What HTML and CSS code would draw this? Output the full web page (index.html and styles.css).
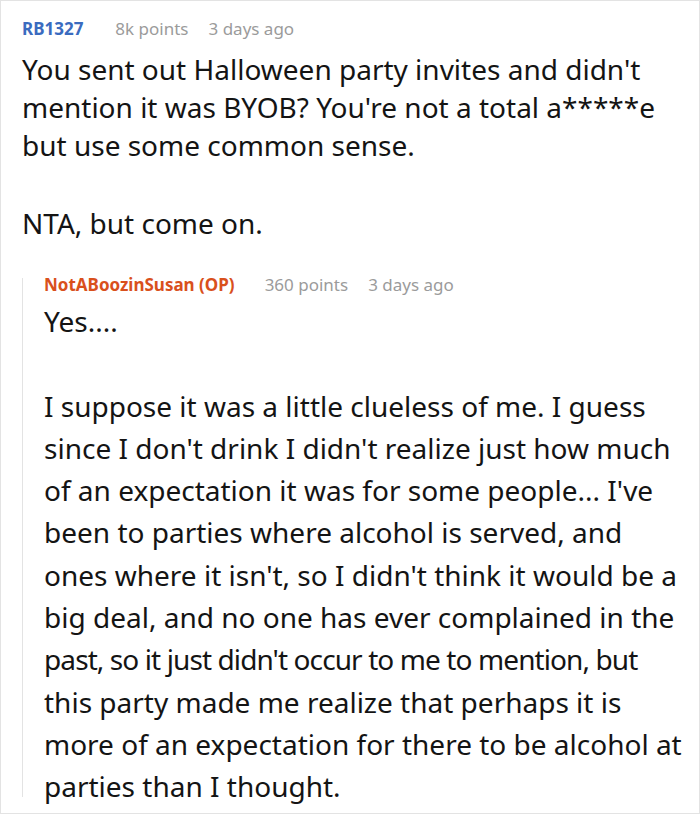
FILE: index.html
```html
<!DOCTYPE html>
<html>
<head>
<meta charset="utf-8">
<link rel="stylesheet" href="styles.css">
</head>
<body>
<div class="thread">
  <div class="comment">
    <div class="meta">
      <span class="author">RB1327</span>
      <span class="info">8k points</span>
      <span class="info">3 days ago</span>
    </div>
    <div class="body top-body">
      <p>You sent out Halloween party invites and didn't mention it was BYOB? You're not a total a*****e but use some common sense.</p>
      <p>NTA, but come on.</p>
    </div>
  </div>
  <div class="reply">
    <div class="reply-line"></div>
    <div class="reply-content">
      <div class="meta">
        <span class="author op">NotABoozinSusan (OP)</span>
        <span class="info">360 points</span>
        <span class="info">3 days ago</span>
      </div>
      <div class="body reply-body">
        <p>Yes....</p>
        <p>I suppose it was a little clueless of me. I guess since I don't drink I didn't realize just how much of an expectation it was for some people... I've been to parties where alcohol is served, and ones where it isn't, so I didn't think it would be a big deal, and no one has ever complained in the <span class="tight">past, so it just didn't occur to me to mention, but</span> this party made me realize that perhaps it is more of an expectation for there to be alcohol at parties than I thought.</p>
      </div>
    </div>
  </div>
</div>
</body>
</html>
```

FILE: styles.css
```css
html, body {
  margin: 0;
  padding: 0;
  background: #fff;
}
body {
  font-family: "Noto Sans", "Open Sans", sans-serif;
  color: #141414;
}
.thread {
  box-sizing: border-box;
  width: 700px;
  height: 814px;
  border: 1px solid #e3e3e3;
  padding: 16px 16px 0 21px;
  overflow: hidden;
}
.meta {
  font-size: 17px;
  line-height: 23px;
  display: flex;
  align-items: baseline;
}
.author {
  font-weight: bold;
  color: #3a6bbf;
  margin-right: 12px;
}
.author.op {
  color: #d9501c;
  margin-right: 10px;
}
.info {
  color: #9b9b9b;
  margin-left: 20px;
}
.body {
  font-size: 28px;
  line-height: 38px;
}
.top-body {
  margin-top: 10px;
}
.top-body p {
  margin: 0 0 40px 0;
}
.reply-body {
  margin-top: 4px;
  line-height: 42.3px;
}
.reply-body p {
  margin: 0 0 42.3px 0;
}
.body p:last-child {
  margin-bottom: 0;
}
.tight {
  letter-spacing: -0.9px;
}
.reply {
  display: flex;
  margin-top: 31px;
}
.reply-line {
  width: 1px;
  flex: none;
  background: #e3e3e3;
  margin-top: 5px;
  margin-bottom: 11px;
}
.reply-content {
  padding-left: 21px;
  flex: 1;
}
```
